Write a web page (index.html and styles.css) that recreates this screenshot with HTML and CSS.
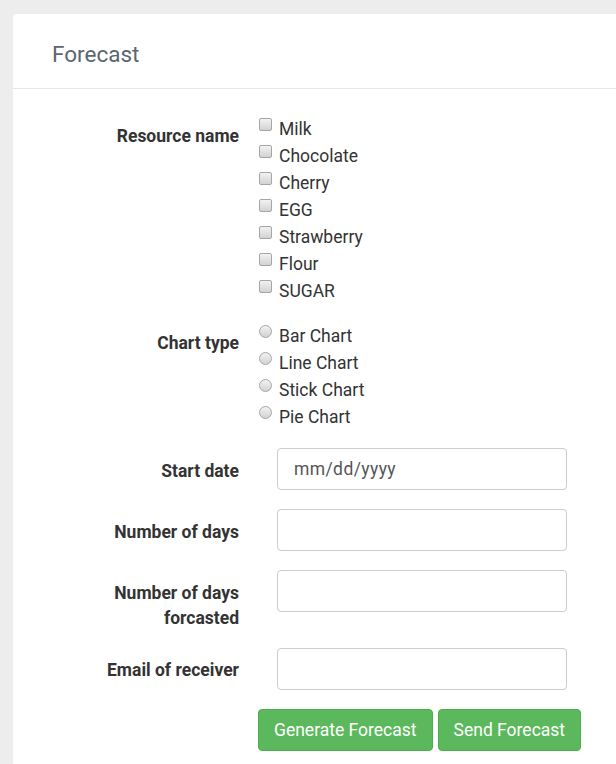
FILE: index.html
```html
<!DOCTYPE html>
<html>
<head>
<meta charset="utf-8">
<link rel="stylesheet" href="styles.css">
</head>
<body>
<div class="card">
  <div class="card-header">Forecast</div>
  <form class="card-body">
    <div class="row group-check">
      <div class="label">Resource name</div>
      <div class="choices">
        <label class="choice"><input type="checkbox" class="box"><span>Milk</span></label>
        <label class="choice"><input type="checkbox" class="box"><span>Chocolate</span></label>
        <label class="choice"><input type="checkbox" class="box"><span>Cherry</span></label>
        <label class="choice"><input type="checkbox" class="box"><span>EGG</span></label>
        <label class="choice"><input type="checkbox" class="box"><span>Strawberry</span></label>
        <label class="choice"><input type="checkbox" class="box"><span>Flour</span></label>
        <label class="choice"><input type="checkbox" class="box"><span>SUGAR</span></label>
      </div>
    </div>
    <div class="row group-check">
      <div class="label">Chart type</div>
      <div class="choices">
        <label class="choice"><input type="radio" name="chart" class="radio"><span>Bar Chart</span></label>
        <label class="choice"><input type="radio" name="chart" class="radio"><span>Line Chart</span></label>
        <label class="choice"><input type="radio" name="chart" class="radio"><span>Stick Chart</span></label>
        <label class="choice"><input type="radio" name="chart" class="radio"><span>Pie Chart</span></label>
      </div>
    </div>
    <div class="row group-input">
      <div class="label">Start date</div>
      <input type="text" class="field date" placeholder="mm/dd/yyyy">
    </div>
    <div class="row group-input">
      <div class="label">Number of days</div>
      <input type="text" class="field">
    </div>
    <div class="row group-input">
      <div class="label">Number of days forcasted</div>
      <input type="text" class="field">
    </div>
    <div class="row group-input">
      <div class="label">Email of receiver</div>
      <input type="text" class="field">
    </div>
    <div class="row actions">
      <div class="label"></div>
      <div class="buttons">
        <button type="button" class="btn">Generate Forecast</button>
        <button type="button" class="btn">Send Forecast</button>
      </div>
    </div>
  </form>
</div>
</body>
</html>
```
FILE: styles.css
```css
html, body {
  margin: 0;
  padding: 0;
}
body {
  background: #ededed;
  font-family: Roboto, "Liberation Sans", sans-serif;
  color: #333;
  padding: 14px 0 0 13px;
  overflow: hidden;
  height: 750px;
}
.card {
  background: #fff;
  border-radius: 4px 0 0 0;
  min-height: 760px;
}
.card-header {
  height: 75px;
  box-sizing: border-box;
  border-bottom: 1px solid #e4e9ee;
  padding: 27px 0 0 39px;
  font-size: 22.5px;
  line-height: 26px;
  color: #5c6670;
}
.card-body {
  padding: 26px 0 0 86px;
  margin: 0;
}
.row {
  display: flex;
  align-items: flex-start;
}
.label {
  width: 140px;
  flex: none;
  text-align: right;
  font-weight: bold;
  font-size: 17.5px;
  line-height: 25px;
  color: #333;
}
.group-check {
  margin-bottom: 18px;
}
.group-check .label {
  padding-top: 9px;
}
.choices {
  display: flex;
  flex-direction: column;
  margin-left: 20px;
}
.choice {
  display: flex;
  align-items: center;
  height: 27px;
  font-size: 17.5px;
  color: #333;
}
.choice span {
  margin-left: 7px;
}
.box, .radio {
  appearance: none;
  -webkit-appearance: none;
  margin: 0;
  width: 13px;
  height: 13px;
  box-sizing: border-box;
  border: 1px solid #a6a6a6;
  background: linear-gradient(#f2f2f2, #d2d2d2);
  position: relative;
  top: -4px;
}
.box {
  border-radius: 2px;
}
.radio {
  border-radius: 50%;
}
.group-input {
  margin-bottom: 19px;
}
.group-input .label {
  padding-top: 10.5px;
  margin-bottom: -2px;
}
.field {
  margin: 0 0 0 38px;
  width: 290px;
  height: 42px;
  box-sizing: border-box;
  border: 1px solid #ccc;
  border-radius: 4px;
  padding: 0 16px;
  font-family: Roboto, "Liberation Sans", sans-serif;
  font-size: 17.5px;
  color: #555;
  outline: none;
}
.field::placeholder {
  color: #555;
  opacity: 1;
}
.date {
  letter-spacing: 0.4px;
}
.buttons {
  display: flex;
  gap: 5px;
  margin-left: 19px;
}
.btn {
  height: 42px;
  padding: 0 15px;
  border: 1px solid #4cae4c;
  border-radius: 4px;
  background: #5cb85c;
  color: #fff;
  font-family: Roboto, "Liberation Sans", sans-serif;
  font-size: 17.5px;
}
```
